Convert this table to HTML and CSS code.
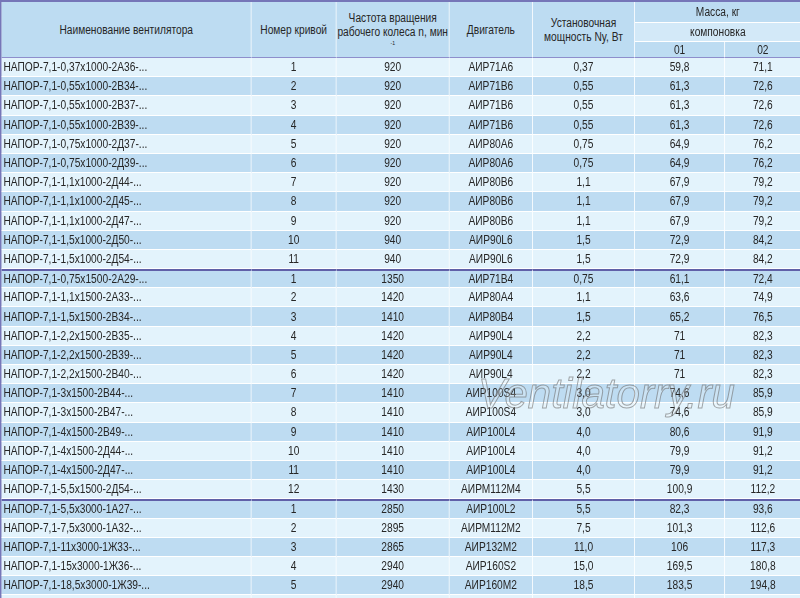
FILE: index.html
```html
<!DOCTYPE html>
<html lang="ru">
<head>
<meta charset="utf-8">
<title>НАПОР-7,1</title>
<link rel="stylesheet" href="styles.css">
</head>
<body>
<div class="wrap">
<table class="spec">
<colgroup>
<col class="c-name"><col class="c-curve"><col class="c-freq"><col class="c-motor"><col class="c-power"><col class="c-m1"><col class="c-m2">
</colgroup>
<thead>
<tr class="h1">
<th rowspan="3">Наименование вентилятора</th>
<th rowspan="3">Номер кривой</th>
<th rowspan="3"><span class="ln">Частота вращения</span><span class="ln">рабочего колеса n, мин</span><span class="sup">-1</span></th>
<th rowspan="3">Двигатель</th>
<th rowspan="3"><span class="ln">Установочная</span><span class="ln">мощность Ny, Вт</span></th>
<th colspan="2">Масса, кг</th>
</tr>
<tr class="h2"><th colspan="2">компоновка</th></tr>
<tr class="h3"><th>01</th><th>02</th></tr>
</thead>
<tbody>
<tr><td>НАПОР-7,1-0,37x1000-2А36-...</td><td>1</td><td>920</td><td>АИР71А6</td><td>0,37</td><td>59,8</td><td>71,1</td></tr>
<tr><td>НАПОР-7,1-0,55x1000-2В34-...</td><td>2</td><td>920</td><td>АИР71В6</td><td>0,55</td><td>61,3</td><td>72,6</td></tr>
<tr><td>НАПОР-7,1-0,55x1000-2В37-...</td><td>3</td><td>920</td><td>АИР71В6</td><td>0,55</td><td>61,3</td><td>72,6</td></tr>
<tr><td>НАПОР-7,1-0,55x1000-2В39-...</td><td>4</td><td>920</td><td>АИР71В6</td><td>0,55</td><td>61,3</td><td>72,6</td></tr>
<tr><td>НАПОР-7,1-0,75x1000-2Д37-...</td><td>5</td><td>920</td><td>АИР80А6</td><td>0,75</td><td>64,9</td><td>76,2</td></tr>
<tr><td>НАПОР-7,1-0,75x1000-2Д39-...</td><td>6</td><td>920</td><td>АИР80А6</td><td>0,75</td><td>64,9</td><td>76,2</td></tr>
<tr><td>НАПОР-7,1-1,1x1000-2Д44-...</td><td>7</td><td>920</td><td>АИР80В6</td><td>1,1</td><td>67,9</td><td>79,2</td></tr>
<tr><td>НАПОР-7,1-1,1x1000-2Д45-...</td><td>8</td><td>920</td><td>АИР80В6</td><td>1,1</td><td>67,9</td><td>79,2</td></tr>
<tr><td>НАПОР-7,1-1,1x1000-2Д47-...</td><td>9</td><td>920</td><td>АИР80В6</td><td>1,1</td><td>67,9</td><td>79,2</td></tr>
<tr><td>НАПОР-7,1-1,5x1000-2Д50-...</td><td>10</td><td>940</td><td>АИР90L6</td><td>1,5</td><td>72,9</td><td>84,2</td></tr>
<tr><td>НАПОР-7,1-1,5x1000-2Д54-...</td><td>11</td><td>940</td><td>АИР90L6</td><td>1,5</td><td>72,9</td><td>84,2</td></tr>
<tr class="grp"><td>НАПОР-7,1-0,75x1500-2А29-...</td><td>1</td><td>1350</td><td>АИР71В4</td><td>0,75</td><td>61,1</td><td>72,4</td></tr>
<tr><td>НАПОР-7,1-1,1x1500-2А33-...</td><td>2</td><td>1420</td><td>АИР80А4</td><td>1,1</td><td>63,6</td><td>74,9</td></tr>
<tr><td>НАПОР-7,1-1,5x1500-2В34-...</td><td>3</td><td>1410</td><td>АИР80В4</td><td>1,5</td><td>65,2</td><td>76,5</td></tr>
<tr><td>НАПОР-7,1-2,2x1500-2В35-...</td><td>4</td><td>1420</td><td>АИР90L4</td><td>2,2</td><td>71</td><td>82,3</td></tr>
<tr><td>НАПОР-7,1-2,2x1500-2В39-...</td><td>5</td><td>1420</td><td>АИР90L4</td><td>2,2</td><td>71</td><td>82,3</td></tr>
<tr><td>НАПОР-7,1-2,2x1500-2В40-...</td><td>6</td><td>1420</td><td>АИР90L4</td><td>2,2</td><td>71</td><td>82,3</td></tr>
<tr><td>НАПОР-7,1-3x1500-2В44-...</td><td>7</td><td>1410</td><td>АИР100S4</td><td>3,0</td><td>74,6</td><td>85,9</td></tr>
<tr><td>НАПОР-7,1-3x1500-2В47-...</td><td>8</td><td>1410</td><td>АИР100S4</td><td>3,0</td><td>74,6</td><td>85,9</td></tr>
<tr><td>НАПОР-7,1-4x1500-2В49-...</td><td>9</td><td>1410</td><td>АИР100L4</td><td>4,0</td><td>80,6</td><td>91,9</td></tr>
<tr><td>НАПОР-7,1-4x1500-2Д44-...</td><td>10</td><td>1410</td><td>АИР100L4</td><td>4,0</td><td>79,9</td><td>91,2</td></tr>
<tr><td>НАПОР-7,1-4x1500-2Д47-...</td><td>11</td><td>1410</td><td>АИР100L4</td><td>4,0</td><td>79,9</td><td>91,2</td></tr>
<tr><td>НАПОР-7,1-5,5x1500-2Д54-...</td><td>12</td><td>1430</td><td>АИРМ112М4</td><td>5,5</td><td>100,9</td><td>112,2</td></tr>
<tr class="grp"><td>НАПОР-7,1-5,5x3000-1А27-...</td><td>1</td><td>2850</td><td>АИР100L2</td><td>5,5</td><td>82,3</td><td>93,6</td></tr>
<tr><td>НАПОР-7,1-7,5x3000-1А32-...</td><td>2</td><td>2895</td><td>АИРМ112М2</td><td>7,5</td><td>101,3</td><td>112,6</td></tr>
<tr><td>НАПОР-7,1-11x3000-1Ж33-...</td><td>3</td><td>2865</td><td>АИР132М2</td><td>11,0</td><td>106</td><td>117,3</td></tr>
<tr><td>НАПОР-7,1-15x3000-1Ж36-...</td><td>4</td><td>2940</td><td>АИР160S2</td><td>15,0</td><td>169,5</td><td>180,8</td></tr>
<tr><td>НАПОР-7,1-18,5x3000-1Ж39-...</td><td>5</td><td>2940</td><td>АИР160М2</td><td>18,5</td><td>183,5</td><td>194,8</td></tr>
<tr><td>&nbsp;</td><td></td><td></td><td></td><td></td><td></td><td></td></tr>
</tbody>
</table>
<span class="watermark">Ventilatorry.ru</span>
</div>
</body>
</html>
```
FILE: styles.css
```css
html, body {
  margin: 0;
  padding: 0;
  background: #ffffff;
}
body {
  font-family: "Liberation Sans", Arial, sans-serif;
  font-size: 12px;
  color: #262626;
}
.wrap {
  position: relative;
  width: 800px;
  height: 598px;
  overflow: hidden;
}
/* Arial Narrow look: the table is laid out wider and compressed horizontally */
.spec {
  width: 941px;
  table-layout: fixed;
  border-collapse: separate;
  border-spacing: 0;
  border-top: 2px solid #7676b8;
  border-left: 2px solid #7676b8;
  transform: scaleX(0.85);
  transform-origin: 0 0;
}
.c-name { width: 294px; }
.c-curve { width: 100px; }
.c-freq { width: 133px; }
.c-motor { width: 98px; }
.c-power { width: 120px; }
.c-m1 { width: 106px; }
.c-m2 { width: 90px; }

.spec th, .spec td {
  box-sizing: border-box;
  padding: 0;
  border-right: 1px solid #ffffff;
  border-bottom: 1px solid #ffffff;
  text-align: center;
  vertical-align: middle;
  font-weight: normal;
  white-space: nowrap;
  overflow: hidden;
  line-height: 14px;
}
.spec th {
  background: #bddcf2;
}
.h1 th { height: 21px; }
.h2 th { height: 19px; background: #d3e9f8; }
.h3 th { height: 16px; border-bottom: 1px solid #8e8ecc; }
.spec thead th[rowspan] { border-bottom: 1px solid #8e8ecc; }
.ln { display: block; }
.sup {
  display: block;
  font-size: 6px;
  line-height: 9px;
}
.spec td {
  height: 19.2px;
}
.spec td:first-child {
  text-align: left;
  padding-left: 2px;
}
.spec tbody tr:nth-child(odd) td { background: #e3f3fc; }
.spec tbody tr:nth-child(even) td { background: #bedcf2; }
.spec tbody tr.grp td { border-top: 2px solid #6060a8; }

.watermark {
  position: absolute;
  left: 478px;
  top: 373px;
  font-family: "Liberation Sans", Arial, sans-serif;
  font-style: italic;
  font-size: 42px;
  line-height: 42px;
  color: rgba(255, 255, 255, 0.2);
  -webkit-text-stroke: 1px rgba(110, 110, 110, 0.6);
  pointer-events: none;
  white-space: nowrap;
}
```
